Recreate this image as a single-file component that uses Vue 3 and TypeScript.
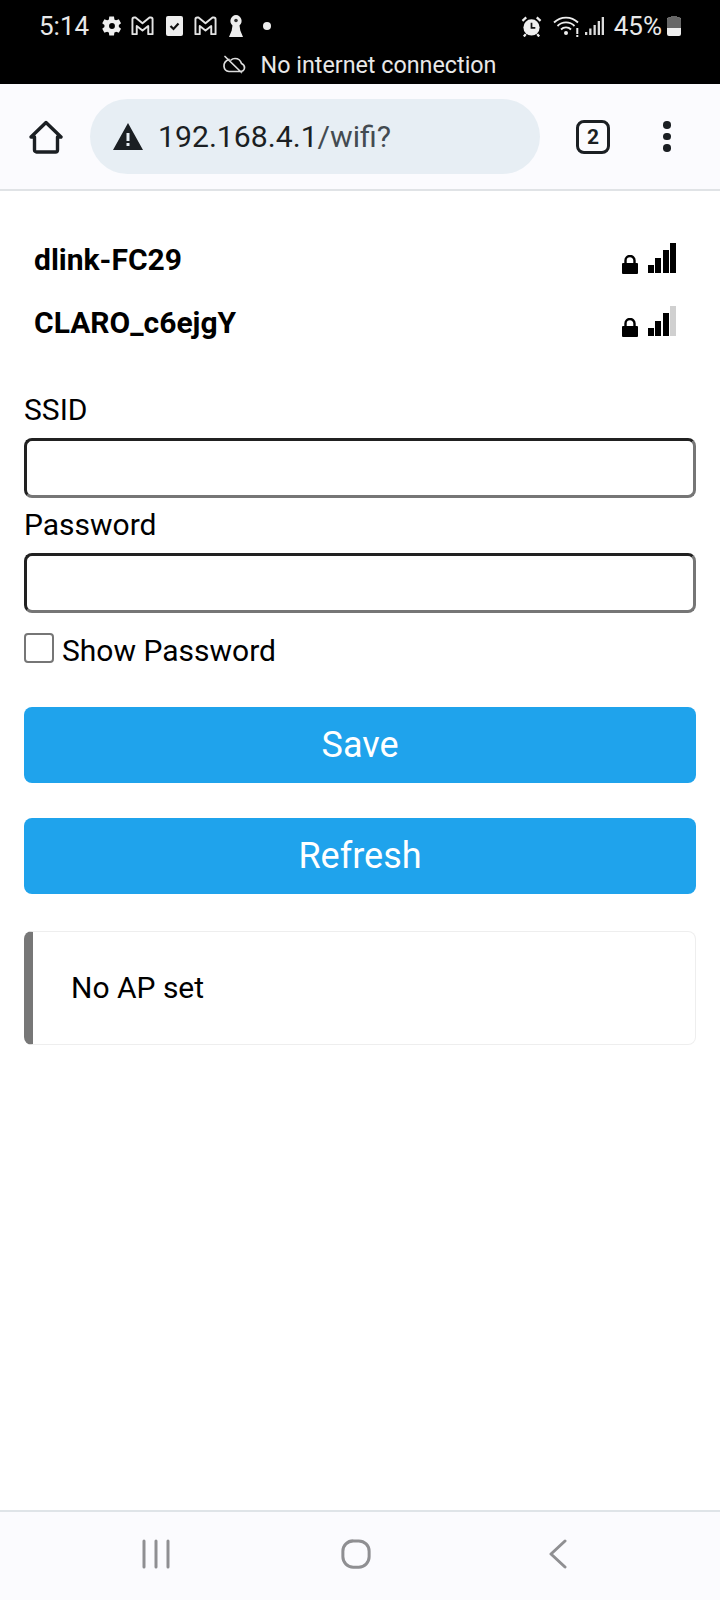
<script setup lang="ts">
  import { ref } from 'vue'

  interface Network {
    name: string
    bars: number
  }

  const networks: Network[] = [
    { name: 'dlink-FC29', bars: 4 },
    { name: 'CLARO_c6ejgY', bars: 3 }
  ]

  const barHeights = [8, 15, 23, 30]
  const ssid = ref('')
  const password = ref('')
  const showPassword = ref(false)
</script>

<template>
  <div class="phone">
    <header class="status">
      <div class="status-top">
        <span class="time">5:14</span>
        <svg class="ic gear" viewBox="0 0 24 24"><path fill="#eee" fill-rule="evenodd" d="M19.400 13c.1-.3.1-.7.1-1s0-.7-.1-1l2.200-1.700c.2-.2.3-.4.1-.7l-2.100-3.600c-.1-.2-.4-.3-.6-.2l-2.600 1c-.5-.4-1.100-.8-1.800-1l-.4-2.800c0-.2-.3-.4-.5-.4h-4.200c-.3 0-.5.2-.5.400l-.4 2.800c-.6.2-1.200.6-1.800 1l-2.600-1c-.2-.1-.5 0-.6.2l-2.100 3.600c-.1.300-.1.500.1.700l2.200 1.700c0 .3-.1.700-.1 1s0 .7.1 1l-2.200 1.700c-.2.2-.3.4-.1.7l2.100 3.600c.1.200.4.300.6.200l2.600-1c.6.400 1.200.8 1.800 1l.4 2.800c0 .2.2.4.5.4h4.200c.2 0 .5-.2.5-.4l.4-2.800c.7-.2 1.300-.6 1.800-1l2.600 1c.2.100.5 0 .6-.2l2.100-3.600c.2-.3.1-.5-.1-.7zM12 15.200a3.200 3.200 0 1 1 0-6.400 3.200 3.200 0 0 1 0 6.400z"/></svg>
        <svg class="ic gmail" viewBox="0 0 24 20"><path fill="none" stroke="#e4e4e4" stroke-width="2" stroke-linejoin="round" d="M1.500 3v15.500h4.500v-8.500l6 4.800 6-4.800v8.500h4.500v-15.500q0-1.800-1.800-1.800h-1.400l-7.300 6-7.300-6h-1.400q-1.800 0-1.800 1.800z"/></svg>
        <svg class="ic check" viewBox="0 0 17 20"><path fill="#eee" d="M2 0h13a2 2 0 0 1 2 2v16a2 2 0 0 1-2 2h-13a2 2 0 0 1-2-2v-16a2 2 0 0 1 2-2z"/><path fill="none" stroke="#111" stroke-width="2.200" d="M4.500 10l3 3 5-5.500"/></svg>
        <svg class="ic gmail second" viewBox="0 0 24 20"><path fill="none" stroke="#e4e4e4" stroke-width="2" stroke-linejoin="round" d="M1.500 3v15.500h4.500v-8.500l6 4.800 6-4.800v8.500h4.500v-15.500q0-1.800-1.800-1.800h-1.400l-7.300 6-7.300-6h-1.400q-1.800 0-1.800 1.800z"/></svg>
        <svg class="ic key" viewBox="0 0 14 22"><path fill="#eee" d="M7 0a6 6 0 0 1 3.500 10.500l.8 5 2.700 6.500h-14l2.700-6.500.8-5a6 6 0 0 1 3.500-10.500z"/><circle cx="7" cy="5.500" r="1.800" fill="#333"/></svg>
        <span class="dot"></span>
        <span class="spacer"></span>
        <svg class="ic alarm" viewBox="0 0 22 22"><circle cx="11" cy="12" r="8.500" fill="#eee"/><path fill="none" stroke="#111" stroke-width="1.800" d="M11 7v5.500h4"/><path fill="none" stroke="#eee" stroke-width="2.400" d="M1.500 5l4-3.500M20.500 5l-4-3.500M5 19l-2 2.500M17 19l2 2.500"/></svg>
        <svg class="ic wifi" viewBox="0 0 26 22"><g fill="none" stroke="#eee" stroke-width="1.800"><path d="M1 7.500a17 17 0 0 1 24 0"/><path d="M4.500 11a12 12 0 0 1 17 0"/><path d="M8 14.500a7 7 0 0 1 10 0"/></g><circle cx="13" cy="18" r="2" fill="#eee"/><path fill="#eee" d="M23.300 13h2v6h-2zM23.300 20h2v2h-2z"/></svg>
        <svg class="ic cell" viewBox="0 0 19 18"><path fill="#ddd" d="M0 15h2.300v3h-2.300zM4.200 11.500h2.300v6.500h-2.300zM8.500 8h2.300v10h-2.300zM12.700 4h2.300v14h-2.300zM16.700 0h2.300v18h-2.300z"/></svg>
        <span class="battery-text">45%</span>
        <svg class="ic battery" viewBox="0 0 14 20"><path fill="#eee" d="M4 0h6v1.500h2a2 2 0 0 1 2 2v14.500a2 2 0 0 1-2 2h-10a2 2 0 0 1-2-2v-14.500a2 2 0 0 1 2-2h2z"/><path fill="#666" d="M4 0h6v1.500h2a2 2 0 0 1 2 2v8.500h-14v-8.500a2 2 0 0 1 2-2h2z"/></svg>
      </div>
      <div class="offline">
        <svg class="cloud" viewBox="0 0 24 20"><path fill="none" stroke="#ddd" stroke-width="1.700" stroke-linecap="round" d="M7 4.500q-5.500 2-5 7 .5 4.500 5 5h11q4 0 4.500-3.500.3-3-3-4.500-1.500-5-6.500-5-2.500 0-4 1.500M3 1.500l16.500 16"/></svg>
        <span>No internet connection</span>
      </div>
    </header>

    <div class="toolbar">
      <svg class="home" viewBox="0 0 34 34"><path fill="none" stroke="#1b1f23" stroke-width="3.400" stroke-linejoin="round" d="M2 17l15-14.500 15 14.500h-3.500v13a2 2 0 0 1-2 2h-19a2 2 0 0 1-2-2v-13z"/></svg>
      <div class="url">
        <svg class="warn" viewBox="0 0 30 27"><path fill="#1b1f23" fill-rule="evenodd" d="M15 0l15 27h-30zM13.500 10v8h3v-8zM13.500 20v3h3v-3z"/></svg>
        <span class="host">192.168.4.1</span><span class="path">/wifi?</span>
      </div>
      <span class="tabs">2</span>
      <div class="menu"><i></i><i></i><i></i></div>
    </div>

    <main class="content">
      <div v-for="net in networks" :key="net.name" class="network">
        <a class="net-name">{{ net.name }}</a>
        <svg class="lock" viewBox="0 0 16 19"><path fill="none" stroke="#000" stroke-width="2.400" d="M3.500 9v-3.500a4.500 4.500 0 0 1 9 0v3.500"/><path d="M1 8h14q1 0 1 1v9q0 1-1 1h-14q-1 0-1-1v-9q0-1 1-1z"/></svg>
        <div class="signal">
          <span
            v-for="(h, i) in barHeights"
            :key="i"
            class="bar"
            :class="{ off: i >= net.bars }"
            :style="{ height: h + 'px' }"
          ></span>
        </div>
      </div>

      <form class="wifi-form" @submit.prevent>
        <label class="field-label" for="s">SSID</label>
        <input id="s" v-model="ssid" class="field" type="text" />
        <label class="field-label" for="p">Password</label>
        <input id="p" v-model="password" class="field" :type="showPassword ? 'text' : 'password'" />
        <label class="show">
          <input v-model="showPassword" class="box" type="checkbox" />
          <span class="show-text">Show Password</span>
        </label>
        <button class="btn">Save</button>
      </form>
      <button class="btn refresh">Refresh</button>
      <div class="msg">No AP set</div>
    </main>

    <nav class="navbar">
      <svg class="nav-ic recents" viewBox="0 0 28 30"><path fill="none" stroke="#8f8f92" stroke-width="3" stroke-linecap="round" d="M2 2v26M14 2v26M26 2v26"/></svg>
      <svg class="nav-ic homebtn" viewBox="0 0 32 32"><rect x="2" y="2" width="28" height="28" rx="11" fill="none" stroke="#8f8f92" stroke-width="3.200"/></svg>
      <svg class="nav-ic back" viewBox="0 0 18 30"><path fill="none" stroke="#8f8f92" stroke-width="3" stroke-linecap="round" stroke-linejoin="round" d="M16 2l-14 13 14 13"/></svg>
    </nav>
  </div>
</template>

<style>
  html, body {
    margin: 0;
    background: #fff;
  }
</style>

<style scoped>
  .phone {
    width: 720px;
    height: 1600px;
    display: flex;
    flex-direction: column;
    font-family: Roboto, "Liberation Sans", sans-serif;
    color: #000;
    overflow: hidden;
  }

  .status {
    height: 84px;
    background: #000;
    color: #e8e8e8;
    box-sizing: border-box;
  }
  .status-top {
    display: flex;
    align-items: center;
    height: 52px;
    padding-left: 39px;
    padding-right: 39px;
  }
  .time {
    font-size: 26px;
    width: 62px;
  }
  .ic {
    display: block;
    flex: none;
  }
  .gear { width: 22px; height: 22px; }
  .gmail { width: 23px; height: 20px; margin-left: 8px; }
  .check { width: 17px; height: 20px; margin-left: 12px; }
  .gmail.second { margin-left: 11px; }
  .key { width: 14px; height: 22px; margin-left: 12px; }
  .dot {
    width: 8px;
    height: 8px;
    border-radius: 50%;
    background: #eee;
    margin-left: 20px;
  }
  .spacer { flex: 1; }
  .alarm { width: 21px; height: 21px; margin-right: 1px; }
  .wifi { width: 26px; height: 22px; margin-left: 10px; }
  .cell { width: 19px; height: 18px; margin-left: 6px; }
  .battery-text { font-size: 26px; margin-left: 10px; }
  .battery { width: 14px; height: 20px; margin-left: 5px; }

  .offline {
    display: flex;
    align-items: center;
    justify-content: center;
    gap: 15px;
    font-size: 23.300px;
    height: 26px;
    padding-right: 2px;
  }
  .cloud { width: 24px; height: 20px; }

  .toolbar {
    height: 105px;
    background: #fbfbfe;
    border-bottom: 2px solid #e0e3e6;
    display: flex;
    align-items: center;
    padding-left: 29px;
  }
  .home { width: 34px; height: 34px; flex: none; }
  .url {
    width: 450px;
    height: 75px;
    margin-left: 27px;
    border-radius: 38px;
    background: #e7eef4;
    display: flex;
    align-items: center;
    padding-left: 23px;
    box-sizing: border-box;
    font-size: 30.200px;
  }
  .warn { width: 30px; height: 27px; margin-right: 15px; flex: none; }
  .host { color: #1b1f23; }
  .path { color: #444b51; }
  .tabs {
    width: 34px;
    height: 34px;
    margin-left: 36px;
    box-sizing: border-box;
    border: 3.500px solid #1b1f23;
    border-radius: 8px;
    display: flex;
    align-items: center;
    justify-content: center;
    font-size: 21px;
    font-weight: 700;
    color: #1b1f23;
  }
  .menu {
    margin-left: 53px;
    display: flex;
    flex-direction: column;
    gap: 4px;
  }
  .menu i {
    display: block;
    width: 7.500px;
    height: 7.500px;
    border-radius: 50%;
    background: #1b1f23;
  }

  .content {
    flex: 1;
    padding: 37px 24px 0;
  }
  .network {
    height: 63px;
    display: flex;
    align-items: center;
    padding-left: 10px;
    padding-right: 20px;
  }
  .net-name {
    flex: 1;
    font-size: 30px;
    font-weight: 700;
    margin-top: -1px;
  }
  .lock {
    width: 16px;
    height: 19px;
    margin-right: 10px;
    margin-top: 9px;
  }
  .signal {
    display: flex;
    align-items: flex-end;
    gap: 1.500px;
    height: 30px;
    margin-top: -3px;
  }
  .bar {
    display: block;
    width: 6px;
    background: #000;
  }
  .bar.off { background: #d0d0d0; }

  .wifi-form {
    margin-top: 29px;
  }
  .field-label {
    display: block;
    font-size: 30px;
    line-height: 30px;
    padding-top: 12px;
    padding-bottom: 13px;
  }
  .field {
    display: block;
    width: 100%;
    height: 60px;
    box-sizing: border-box;
    border: 3px solid;
    border-color: #212121 #767676 #767676 #212121;
    border-radius: 8px;
    background: #fff;
    font-size: 28px;
    outline: none;
    padding: 0 8px;
  }
  .show {
    display: flex;
    align-items: center;
    margin-top: 20px;
    font-size: 30px;
    line-height: 30px;
    height: 30px;
  }
  .show-text {
    padding-top: 6px;
  }
  .box {
    appearance: none;
    width: 30px;
    height: 30px;
    margin: 0 8px 0 0;
    box-sizing: border-box;
    border: 2px solid #767676;
    border-radius: 4px;
    background: #fff;
  }
  .btn {
    display: block;
    width: 100%;
    height: 76px;
    margin-top: 44px;
    border: 0;
    border-radius: 8px;
    background: #1fa3ec;
    color: #fff;
    font-family: inherit;
    font-size: 36px;
    padding: 0;
  }
  .btn.refresh {
    margin-top: 35px;
  }
  .msg {
    margin-top: 37px;
    height: 114px;
    box-sizing: border-box;
    border: 1px solid #eee;
    border-left: 9px solid #777;
    border-radius: 8px;
    padding-left: 38px;
    padding-bottom: 2px;
    display: flex;
    align-items: center;
    font-size: 30px;
  }

  .navbar {
    height: 90px;
    box-sizing: border-box;
    background: #fbfbfe;
    border-top: 2px solid #dfe4e8;
    display: flex;
    align-items: center;
    padding: 0 0 5px 142px;
  }
  .nav-ic {
    height: 30px;
    width: auto;
    display: block;
  }
  .homebtn { margin-left: 171px; }
  .back { margin-left: 178px; }
</style>
